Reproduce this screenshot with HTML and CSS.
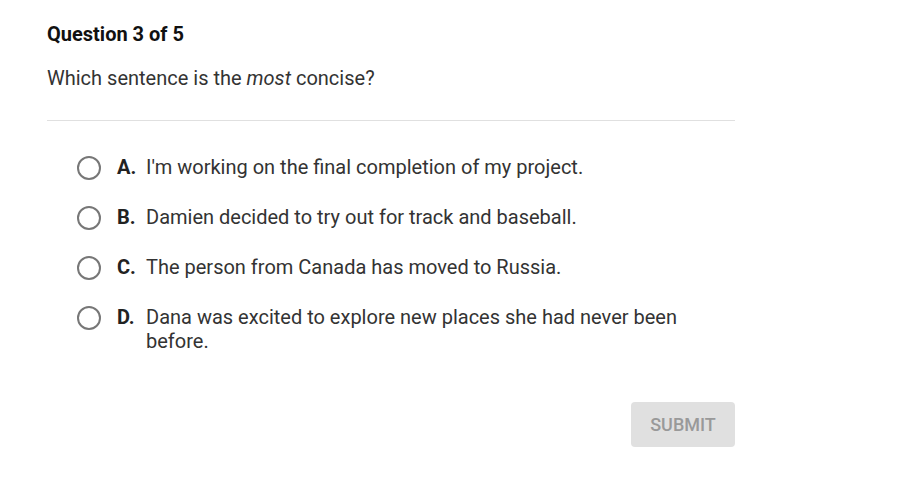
FILE: index.html
```html
<!DOCTYPE html>
<html>
<head>
<meta charset="utf-8">
<link rel="stylesheet" href="styles.css">
</head>
<body>
<div class="quiz">
  <h1 class="title">Question 3 of 5</h1>
  <p class="prompt">Which sentence is the <em>most</em> concise?</p>
  <hr class="rule">
  <ul class="options">
    <li class="option"><span class="radio"></span><span class="letter">A.</span><span class="text">I'm working on the final completion of my project.</span></li>
    <li class="option"><span class="radio"></span><span class="letter">B.</span><span class="text">Damien decided to try out for track and baseball.</span></li>
    <li class="option"><span class="radio"></span><span class="letter">C.</span><span class="text">The person from Canada has moved to Russia.</span></li>
    <li class="option"><span class="radio"></span><span class="letter">D.</span><span class="text">Dana was excited to explore new places she had never been before.</span></li>
  </ul>
  <div class="actions"><button class="submit">SUBMIT</button></div>
</div>
</body>
</html>
```
FILE: styles.css
```css
html, body { margin: 0; padding: 0; background: #fff; }
body { font-family: Roboto, "Liberation Sans", sans-serif; color: #222; }
.quiz { width: 688px; padding: 20px 0 0 47px; }
.title { font-size: 20px; font-weight: 700; margin: 0; line-height: 28px; color: #111; }
.prompt { font-size: 20px; margin: 17px 0 0; line-height: 26px; color: #333; }
.rule { border: 0; border-top: 1px solid #e0e0e0; margin: 29px 0 0; }
.options { list-style: none; margin: 34px 0 0; padding: 0 0 0 30px; }
.option { display: flex; align-items: flex-start; font-size: 20px; line-height: 24px; color: #333; margin-bottom: 26px; max-width: 610px; }
.radio { flex: none; box-sizing: border-box; width: 24px; height: 24px; border: 2px solid #777; border-radius: 50%; margin-top: 1px; margin-bottom: -1px; margin-right: 16px; }
.letter { flex: none; font-weight: 700; width: 29px; color: #222; }
.text { flex: 1; }
.actions { display: flex; justify-content: flex-end; margin-top: 49px; }
.submit { width: 104px; height: 45px; border: 0; border-radius: 4px; background: #e0e0e0; color: #999; font-family: Roboto, sans-serif; font-size: 18px; font-weight: 500; }
```
